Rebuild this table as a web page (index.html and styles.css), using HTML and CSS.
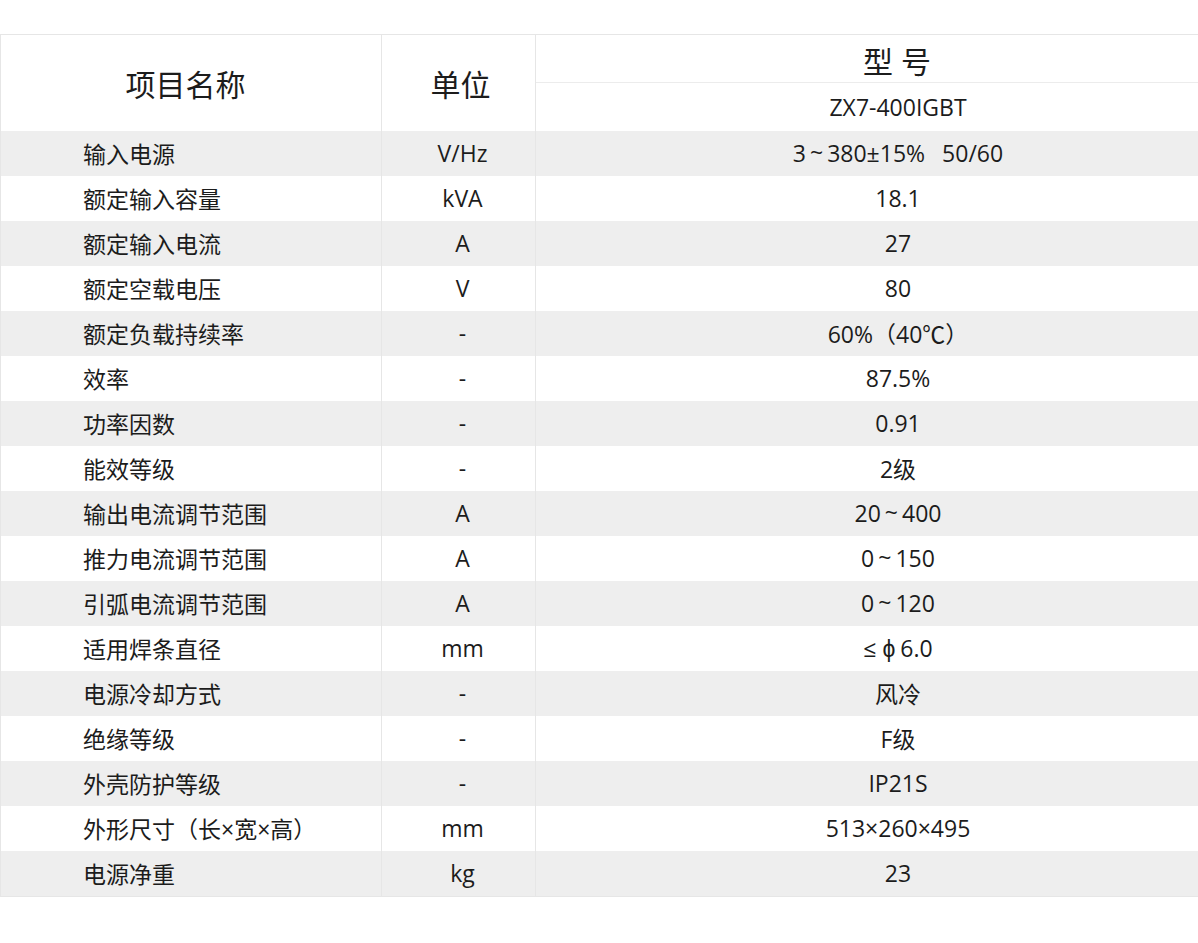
FILE: index.html
```html
<!DOCTYPE html>
<html lang="zh-CN">
<head>
<meta charset="utf-8">
<title>参数表</title>
<link rel="stylesheet" href="styles.css">
</head>
<body>
<table class="spec">
  <colgroup>
    <col class="c-name">
    <col class="c-unit">
    <col class="c-val">
  </colgroup>
  <thead>
    <tr class="h1">
      <th class="hname" rowspan="2">项目名称</th>
      <th class="hunit" rowspan="2">单位</th>
      <th class="hval">型 号</th>
    </tr>
    <tr class="h2">
      <th class="hmodel">ZX7-400IGBT</th>
    </tr>
  </thead>
  <tbody>
    <tr><td class="name">输入电源</td><td class="unit">V/Hz</td><td class="val">3<span class="tl">~</span>380±15%<span class="gap"></span>50/60</td></tr>
    <tr><td class="name">额定输入容量</td><td class="unit">kVA</td><td class="val">18.1</td></tr>
    <tr><td class="name">额定输入电流</td><td class="unit">A</td><td class="val">27</td></tr>
    <tr><td class="name">额定空载电压</td><td class="unit">V</td><td class="val">80</td></tr>
    <tr><td class="name">额定负载持续率</td><td class="unit">-</td><td class="val">60%（40℃）</td></tr>
    <tr><td class="name">效率</td><td class="unit">-</td><td class="val">87.5%</td></tr>
    <tr><td class="name">功率因数</td><td class="unit">-</td><td class="val">0.91</td></tr>
    <tr><td class="name">能效等级</td><td class="unit">-</td><td class="val">2级</td></tr>
    <tr><td class="name">输出电流调节范围</td><td class="unit">A</td><td class="val">20<span class="tl">~</span>400</td></tr>
    <tr><td class="name">推力电流调节范围</td><td class="unit">A</td><td class="val">0<span class="tl">~</span>150</td></tr>
    <tr><td class="name">引弧电流调节范围</td><td class="unit">A</td><td class="val">0<span class="tl">~</span>120</td></tr>
    <tr><td class="name">适用焊条直径</td><td class="unit">mm</td><td class="val">≤<span class="phi">ϕ</span>6.0</td></tr>
    <tr><td class="name">电源冷却方式</td><td class="unit">-</td><td class="val">风冷</td></tr>
    <tr><td class="name">绝缘等级</td><td class="unit">-</td><td class="val">F级</td></tr>
    <tr><td class="name">外壳防护等级</td><td class="unit">-</td><td class="val">IP21S</td></tr>
    <tr><td class="name">外形尺寸（长×宽×高）</td><td class="unit">mm</td><td class="val">513×260×495</td></tr>
    <tr><td class="name">电源净重</td><td class="unit">kg</td><td class="val">23</td></tr>
  </tbody>
</table>
</body>
</html>
```
FILE: styles.css
```css
html, body {
  margin: 0;
  padding: 0;
  background: #ffffff;
}

body {
  font-family: "Open Sans", "Noto Sans CJK SC", sans-serif;
  color: #1c1c1c;
}

.spec {
  margin-top: 34px;
  width: 1198px;
  border-collapse: collapse;
  table-layout: fixed;
  border: 1px solid #e6e6e6;
}

.c-name { width: 381px; }
.c-unit { width: 154px; }
.c-val { width: 663px; }

.spec th {
  font-weight: normal;
  padding: 0;
  border-left: 1px solid #e6e6e6;
  border-right: 1px solid #e6e6e6;
  background: #ffffff;
}

.h1 { height: 48px; }
.h2 { height: 48px; }

.hname {
  font-size: 30px;
  text-align: center;
  padding-right: 11px !important;
}

.hunit {
  font-size: 30px;
  text-align: center;
  padding-left: 4px !important;
}

.hval {
  font-size: 30px;
  text-align: center;
  padding-left: 60px !important;
  border-bottom: 1px solid #ececec;
  padding-top: 2px !important;
}

.hmodel {
  font-size: 23px;
  text-align: center;
  padding-left: 62px !important;
}

.spec td {
  height: 45px;
  padding: 0;
  font-size: 23px;
  vertical-align: middle;
  border-left: 1px solid #e6e6e6;
  border-right: 1px solid #e6e6e6;
}

.spec tbody tr:nth-child(odd) td {
  background: #eeeeee;
}

.name {
  text-align: left;
  padding-left: 82px !important;
}

.unit {
  text-align: center;
  padding-left: 8px !important;
}

.val {
  text-align: center;
  padding-left: 62px !important;
}

.tl {
  display: inline-block;
  font-size: 1em;
  margin: 0 4px;
  position: relative;
  top: -1px;
}

.gap {
  display: inline-block;
  width: 17px;
}

.phi {
  display: inline-block;
  margin: 0 5px 0 6px;
}
```
